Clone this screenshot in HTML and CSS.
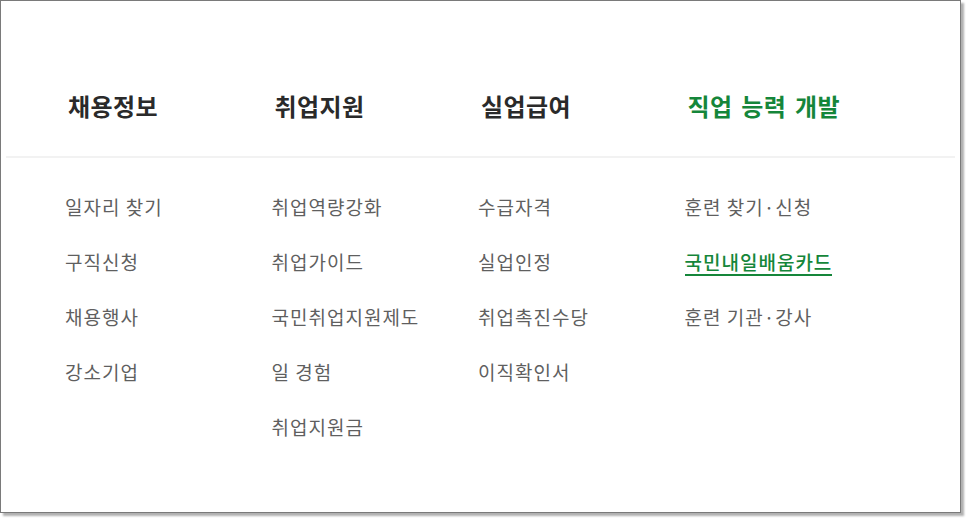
FILE: index.html
```
<html>
<head>
    <meta charset="UTF-8"/>
    <meta name="viewport" content="width=device-width, initial-scale=1.0" />
    <title>메뉴</title>
    <link rel="stylesheet" href="styles.css">
</head>
<body>
<div class="frame">
    <div class="menu_head">
        <div class="head_item">채용정보</div>
        <div class="head_item">취업지원</div>
        <div class="head_item">실업급여</div>
        <div class="head_item active">직업 능력 개발</div>
    </div>
    <div class="menu_body">
        <ul class="sub_list">
            <li>일자리 찾기</li>
            <li>구직신청</li>
            <li>채용행사</li>
            <li>강소기업</li>
        </ul>
        <ul class="sub_list">
            <li>취업역량강화</li>
            <li>취업가이드</li>
            <li>국민취업지원제도</li>
            <li>일 경험</li>
            <li>취업지원금</li>
        </ul>
        <ul class="sub_list">
            <li>수급자격</li>
            <li>실업인정</li>
            <li>취업촉진수당</li>
            <li>이직확인서</li>
        </ul>
        <ul class="sub_list">
            <li>훈련 찾기·신청</li>
            <li><span class="on">국민내일배움카드</span></li>
            <li>훈련 기관·강사</li>
        </ul>
    </div>
</div>
</body>
</html>
```
FILE: styles.css
```
body {
    margin: 0;
    font-family: "Noto Sans CJK KR", "Noto Sans", sans-serif;
    background: #fff;
}

.frame {
    width: 959px;
    height: 511px;
    border: 1px solid #7a7a7a;
    box-shadow: 3px 3px 2px #b0b0b0;
    background: #fff;
}

.menu_head {
    display: grid;
    grid-template-columns: repeat(4, 206.5px);
    padding: 83px 0 0 62px;
    height: 72px;
    margin: 0 5px;
    border-bottom: 2px solid #f2f2f2;
}

.head_item {
    font-size: 24px;
    font-weight: 700;
    letter-spacing: 0.4px;
    word-spacing: 3px;
    color: #2a2a2a;
    line-height: 44px;
    height: 44px;
}

.head_item.active {
    color: #15863a;
}

.menu_body {
    display: grid;
    grid-template-columns: repeat(4, 206.5px);
    padding: 34px 0 0 64px;
}

.sub_list {
    list-style: none;
    margin: 0;
    padding: 0;
}

.sub_list li {
    font-size: 19px;
    letter-spacing: 1px;
    color: #5f5f5f;
    line-height: 30px;
    height: 30px;
    margin-bottom: 25px;
}

.sub_list .on {
    color: #15863a;
    font-weight: 500;
    display: inline-block;
    border-bottom: 2px solid #15863a;
    line-height: 25px;
}
```
